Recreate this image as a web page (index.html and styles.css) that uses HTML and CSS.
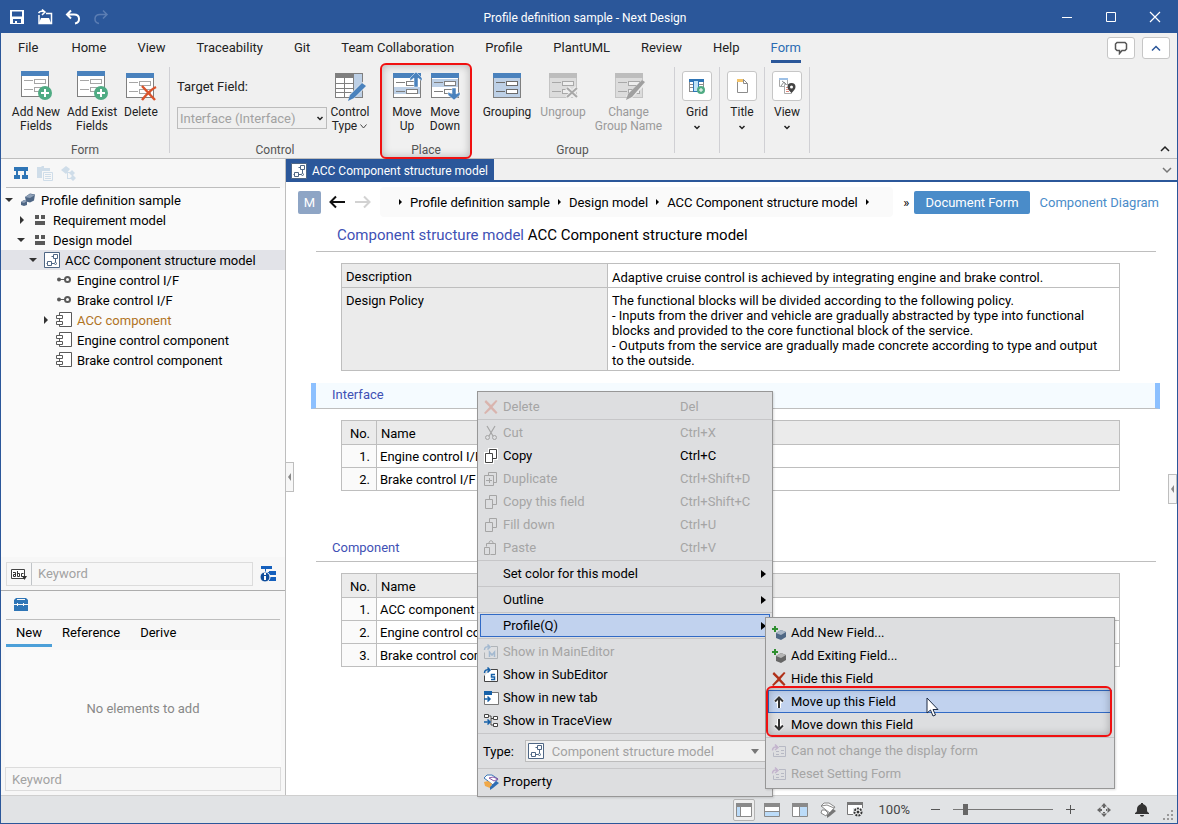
FILE: index.html
```html
<!DOCTYPE html>
<html lang="en">
<head>
<meta charset="utf-8">
<meta name="viewport" content="width=device-width, initial-scale=1">
<title>Profile definition sample - Next Design</title>
<link rel="stylesheet" href="styles.css">
</head>
<body>

<!-- shared icons -->
<svg class="sprite" aria-hidden="true">
    <symbol id="i-form" viewBox="0 0 32 30">
        <g shape-rendering="crispEdges">
            <path fill="#7f7f7f" d="M1 4h28v22H1z"/><path fill="#fff" d="M2 5h26v20H2z"/>
            <path fill="#4a82bd" d="M1 0h28v5H1z"/>
            <path fill="#a6a6a6" d="M4 9h9v1H4zM4 18h9v1H4zM14 8h12v5H14zM14 16h12v5H14z"/>
            <path fill="#fff" d="M15 9h10v3H15zM15 17h10v3H15z"/>
        </g>
        <circle cx="25" cy="22" r="7" fill="#4fab83"/>
        <path stroke="#fff" stroke-width="2" d="M25 18v8M21 22h8"/>
    </symbol>
    <symbol id="i-structure" viewBox="0 0 16 16">
        <path fill="#fff" stroke="#4f6785" d="M.5.5h15v15H.5z"/>
        <path fill="none" stroke="#4f6785" d="M9.500 2.500h4v4h-4zM3.500 9.500h4v4h-4zM7.500 11.500h3M11.500 6.500v4M9.500 4.500h-2M3.500 11.500h-1"/>
        <circle cx="11.500" cy="11.500" r="1" fill="#fff" stroke="#4f6785"/>
    </symbol>
    <symbol id="i-interface" viewBox="0 0 16 16">
        <circle cx="3" cy="7.500" r="2" fill="#595959"/><path stroke="#595959" d="M3 7.500h6"/>
        <circle cx="11.500" cy="7.500" r="2.500" fill="none" stroke="#595959" stroke-width="2"/>
    </symbol>
    <symbol id="i-component" viewBox="0 0 16 16">
        <path fill="#fff" stroke="#595959" d="M3.500.5h12v14h-12z"/>
        <path fill="#fff" stroke="#595959" d="M.5 3.500h6v3h-6zM.5 9.500h6v3h-6z"/>
    </symbol>
    <symbol id="i-package" viewBox="0 0 16 16">
        <path fill="#595959" d="M3 3h4v4H3zM9 3h4v4H9zM3 9h10v4H3z"/>
    </symbol>
    <symbol id="i-copy" viewBox="0 0 16 16">
        <path fill="none" stroke="currentColor" d="M6.500 5v-3.500h7v9H10M2.500 5.500h7v9h-7z"/>
    </symbol>
    <symbol id="i-cross" viewBox="0 0 16 16">
        <path fill="currentColor" d="M3 1l5 5 5-5 1.500 1L9.500 8l5 5.500-1.500 1.500L8 10l-5.500 5L1 14l5.500-6L1.500 3z"/>
    </symbol>
    <symbol id="i-down" viewBox="0 0 8 8"><path fill="none" stroke="currentColor" stroke-width="1.500" d="M1.500 3l2.500 2.500L6.500 3"/></symbol>
    <symbol id="i-formset" viewBox="0 0 16 16">
        <path fill="none" stroke="#b7b9c4" d="M8 3.500h6.500v10h-12v-4"/>
        <path stroke="#b7b9c4" d="M5 8.500h3M10 7.500h3M5 11.500h3M10 10.500h3"/>
        <path fill="none" stroke="#c3b4cd" stroke-width="1.500" d="M1.500 7.500c0-3 2-4 5-3M4 1.500l3 3L4 7"/>
    </symbol>
</svg>

<div class="app">
    <header class="titlebar">
        <div class="quick">
            <button type="button" aria-label="Save"><svg width="16" height="16" viewBox="0 0 16 16"><path fill="#fff" d="M1 1h14v14H1zM3 2.500v5h10v-5zM4 10v4h2v-2h2v2h4v-4z" fill-rule="evenodd"/></svg></button>
            <button type="button" aria-label="Open"><svg width="16" height="16" viewBox="0 0 16 16"><path fill="none" stroke="#fff" stroke-width="1.500" d="M2 6v8.500h12.500V4.500H9M1.500 4c1-1.500 3-2 5-1.500M5 .5l3 2.500-3 3"/><path fill="#fff" d="M4 9h8l2 5H2z"/></svg></button>
            <button type="button" aria-label="Undo"><svg width="16" height="16" viewBox="0 0 16 16"><path fill="none" stroke="#fff" stroke-width="2" d="M6 1.500L2 5.500l4 4M2.500 5.500H9c6.500 0 6.500 8 1 9"/></svg></button>
            <button type="button" aria-label="Redo" disabled><svg width="16" height="16" viewBox="0 0 16 16"><path fill="none" stroke="#5b7db3" stroke-width="1.500" d="M10 1.500l4 4-4 4M13.500 5.500H7c-6.500 0-6.500 8-1 9"/></svg></button>
        </div>
        <h1>Profile definition sample - Next Design</h1>
        <div class="window-buttons">
            <button type="button" aria-label="Minimize"><svg width="12" height="12" viewBox="0 0 12 12"><path stroke="#fff" d="M1 6.500h10"/></svg></button>
            <button type="button" aria-label="Maximize"><svg width="12" height="12" viewBox="0 0 12 12"><path fill="none" stroke="#fff" d="M1.500 1.500h9v9h-9z"/></svg></button>
            <button type="button" aria-label="Close"><svg width="12" height="12" viewBox="0 0 12 12"><path stroke="#fff" stroke-width="1.200" d="M1 1l10 10M11 1L1 11"/></svg></button>
        </div>
    </header>

    <nav class="menubar">
        <button type="button" class="file">File</button>
        <button type="button">Home</button>
        <button type="button">View</button>
        <button type="button">Traceability</button>
        <button type="button">Git</button>
        <button type="button">Team Collaboration</button>
        <button type="button">Profile</button>
        <button type="button">PlantUML</button>
        <button type="button">Review</button>
        <button type="button">Help</button>
        <button type="button" class="active">Form</button>
        <div class="menubar-right">
            <button type="button" class="box-button" aria-label="Comments"><svg width="14" height="14" viewBox="0 0 14 14"><path fill="none" stroke="#555" stroke-width="1.500" d="M3 1.500h8l1.500 1.500v5L11 9.500H8l-2.500 3v-3H3L1.500 8V3z"/></svg></button>
            <button type="button" class="box-button" aria-label="Collapse"><svg width="14" height="14" viewBox="0 0 14 14"><path fill="none" stroke="#2b579a" stroke-width="1.500" d="M3 9.500L7 5.500l4 4"/></svg></button>
        </div>
    </nav>

    <section class="ribbon">
        <div class="group group-form">
            <div class="group-items">
                <button type="button" class="tool"><svg width="32" height="30"><use href="#i-form"/></svg><span>Add New<br>Fields</span></button>
                <button type="button" class="tool"><svg width="32" height="30"><use href="#i-form"/></svg><span>Add Exist<br>Fields</span></button>
                <button type="button" class="tool tool-small"><svg width="32" height="30" viewBox="0 0 32 30"><g shape-rendering="crispEdges"><path fill="#7f7f7f" d="M1 4h28v23H1z"/><path fill="#fff" d="M2 7h26v19H2z"/><path fill="#4a82bd" d="M1 2h28v5H1z"/><path fill="#a6a6a6" d="M4 11h9v1H4zM4 20h9v1H4zM14 10h12v5H14zM14 18h12v5H14z"/><path fill="#fff" d="M15 11h10v3H15zM15 19h10v3H15z"/></g><path stroke="#d9532c" stroke-width="2.500" fill="none" d="M17 15l13 14M31 16c-6 3-10 8-14 13"/></svg><span>Delete</span></button>
            </div>
            <div class="group-label">Form</div>
        </div>
        <div class="group group-control">
            <div class="group-items">
                <div class="target-field">
                    <label for="target">Target Field:</label>
                    <div class="select">
                        <select id="target" disabled><option>Interface (Interface)</option></select>
                        <svg width="8" height="8"><use href="#i-down"/></svg>
                    </div>
                </div>
                <button type="button" class="tool tool-small"><svg width="32" height="30" viewBox="0 0 32 30"><g shape-rendering="crispEdges"><path fill="#7f7f7f" d="M1 2h28v25H1z"/><path fill="#fff" d="M2 7h8v5H2zM11 7h8v5h-8zM2 13h8v4H2zM11 13h8v4h-8zM2 18h8v3H2zM11 18h8v3h-8zM2 22h8v4H2zM11 22h8v4h-8z"/><path fill="#bdd0e6" d="M20 3h8v23h-8z"/></g><path stroke="#f0f0f0" stroke-width="6" d="M16 27L31 13"/><path fill="#4a82bd" d="M14 30l2-6L28 12l4 3-12 12z"/></svg><span>Control<br>Type<svg class="inline-arrow" width="9" height="8" viewBox="0 0 8 8"><path fill="none" stroke="#444" d="M1 2.500L4 6l3-3.500"/></svg></span></button>
            </div>
            <div class="group-label">Control</div>
        </div>
        <div class="group group-place">
            <div class="group-items">
                <button type="button" class="tool tool-narrow"><svg width="32" height="30" viewBox="0 0 32 30"><g shape-rendering="crispEdges"><path fill="#7f7f7f" d="M2 4h28v23H2z"/><path fill="#fff" d="M3 7h26v19H3z"/><path fill="#bdd0e6" d="M3 16h26v7H3z"/><path fill="#4a82bd" d="M2 2h28v5H2z"/><path fill="#7f7f7f" d="M5 11h9v1H5zM5 20h9v1H5zM15 10h12v5H15zM15 18h12v5H15z"/><path fill="#fff" d="M16 11h10v3H16zM16 19h10v3H16z"/></g><path fill="#4a82bd" stroke="#fff" stroke-width=".5" d="M25 1l6 6v3l-4-3v9h-4V7l-4 3V7z"/></svg><span>Move<br>Up</span></button>
                <button type="button" class="tool tool-narrow"><svg width="32" height="30" viewBox="0 0 32 30"><g shape-rendering="crispEdges"><path fill="#7f7f7f" d="M2 4h28v23H2z"/><path fill="#fff" d="M3 7h26v19H3z"/><path fill="#bdd0e6" d="M3 8h26v8H3z"/><path fill="#4a82bd" d="M2 2h28v5H2z"/><path fill="#7f7f7f" d="M5 11h9v1H5zM5 20h9v1H5zM15 10h12v5H15zM15 18h12v5H15z"/><path fill="#fff" d="M16 11h10v3H16zM16 19h10v3H16z"/></g><path fill="#4a82bd" stroke="#fff" stroke-width=".5" d="M23 17h4v6l4-2v3l-6 5-6-5v-3l4 2z"/></svg><span>Move<br>Down</span></button>
            </div>
            <div class="group-label">Place</div>
            <div class="callout callout-place"></div>
        </div>
        <div class="group group-group">
            <div class="group-items">
                <button type="button" class="tool"><svg width="32" height="30" viewBox="0 0 32 30"><g shape-rendering="crispEdges"><path fill="#7f7f7f" d="M2 4h28v23H2z"/><path fill="#bdd0e6" d="M3 7h26v19H3z"/><path fill="#4a82bd" d="M2 2h28v5H2z"/><path fill="#6b6b6b" d="M5 11h9v1H5zM5 20h9v1H5zM15 10h12v5H15zM15 18h12v5H15z"/><path fill="#fff" d="M16 11h10v3H16zM16 19h10v3H16z"/></g></svg><span>Grouping</span></button>
                <button type="button" class="tool" disabled><svg width="32" height="30" viewBox="0 0 32 30"><g shape-rendering="crispEdges"><path fill="#c4c4c4" d="M2 4h28v23H2z"/><path fill="#dcdcdc" d="M3 7h26v19H3z"/><path fill="#bdbdbd" d="M2 2h28v5H2z"/><path fill="#a8a8a8" d="M5 11h9v1H5zM5 20h9v1H5zM15 10h12v5H15zM15 18h12v5H15z"/><path fill="#eee" d="M16 11h10v3H16zM16 19h10v3H16z"/></g><path stroke="#eee" stroke-width="5" d="M20 17l10 10M30 17L20 27"/><path stroke="#a8a8a8" stroke-width="2" d="M20 17l10 9M30 17l-10 9"/></svg><span>Ungroup</span></button>
                <button type="button" class="tool tool-wide" disabled><svg width="32" height="30" viewBox="0 0 32 30"><g shape-rendering="crispEdges"><path fill="#c4c4c4" d="M2 4h28v23H2z"/><path fill="#dcdcdc" d="M3 7h26v19H3z"/><path fill="#bdbdbd" d="M2 2h28v5H2z"/><path fill="#a8a8a8" d="M5 11h9v1H5zM5 20h9v1H5zM15 10h12v5H15zM15 18h12v5H15z"/><path fill="#eee" d="M16 11h10v3H16zM16 19h10v3H16z"/></g><path stroke="#eee" stroke-width="6" d="M15 27L31 11"/><path fill="#a0a0a0" d="M13 29l2-6L29 9l3 2-13 15z"/></svg><span>Change<br>Group Name</span></button>
            </div>
            <div class="group-label">Group</div>
        </div>
        <div class="group group-single">
            <button type="button" class="tool"><span class="icon-box"><svg width="18" height="18" viewBox="0 0 18 18"><g shape-rendering="crispEdges"><path fill="#8c8c8c" d="M1 2h15v13H1z"/><path fill="#fff" d="M2 5h3v2H2zM2 8h3v2H2zM2 11h3v3H2zM11 5h4v2h-4zM11 8h4v2h-4zM11 11h4v3h-4z"/><path fill="#2e75b6" d="M1 2h15v3H1z"/><path fill="#2e75b6" d="M5 2h6v13H5z"/><path fill="#bfe3f7" d="M6 4h4v10H6z"/></g><circle cx="13" cy="13" r="4" fill="#4fab83"/><path stroke="#fff" d="M13 11v4M11 13h4"/></svg></span><span>Grid</span><svg width="8" height="8"><use href="#i-down"/></svg></button>
        </div>
        <div class="group group-single">
            <button type="button" class="tool"><span class="icon-box"><svg width="18" height="18" viewBox="0 0 18 18"><path fill="#fff" stroke="#8c8c8c" d="M4.500 2.500h6l4 4v9h-10z"/><path fill="#f4c469" d="M4 2h6v3H4z"/><path fill="none" stroke="#8c8c8c" d="M10.500 2.500v4h4"/></svg></span><span>Title</span><svg width="8" height="8"><use href="#i-down"/></svg></button>
        </div>
        <div class="group group-single">
            <button type="button" class="tool"><span class="icon-box"><svg width="18" height="18" viewBox="0 0 18 18"><path fill="#fff" stroke="#a8a8a8" d="M1.500 2.500h8v7h-8z"/><path fill="#9dc0e6" d="M1 1h9v2H1z"/><path fill="none" stroke="#8c8c8c" d="M3 9l3-4 3 4M4 4l4 3"/><path fill="#fff" stroke="#a8a8a8" d="M6.500 7.500h7v9h-7z"/><path stroke="#e08a7d" d="M8 10.500h3M8 12.500h3M8 14.500h3"/><path fill="#444" d="M13.500 6a4 4 0 0 1 4 4c0 2-2 4-4 6-2-2-4-4-4-6a4 4 0 0 1 4-4z"/><circle cx="13.500" cy="10" r="1.500" fill="#fff"/></svg></span><span>View</span><svg width="8" height="8"><use href="#i-down"/></svg></button>
        </div>
        <button type="button" class="ribbon-fold" aria-label="Fold ribbon"><svg width="12" height="8" viewBox="0 0 12 8"><path fill="none" stroke="#222" stroke-width="1.500" d="M2 6l4-4 4 4"/></svg></button>
    </section>

    <div class="workspace">
        <aside class="sidebar">
            <div class="pane-tools">
                <svg width="16" height="16" viewBox="0 0 16 16"><path fill="#2e75b6" d="M1 2h14v4h-2v4h2v4H9v-4h2V6H5v4h2v4H1v-4h2V6H1z"/></svg>
                <svg width="16" height="16" viewBox="0 0 16 16"><path fill="#cfdde9" d="M0 2h4l1-1h2v2h6v3H5v7H0z"/><path fill="#f7f7f7" stroke="#cfdde9" d="M6.500 7.500h9v8h-9z"/><path stroke="#cfdde9" d="M8 9.500h6M8 11.500h6M8 13.500h6"/></svg>
                <svg width="16" height="16" viewBox="0 0 16 16"><path fill="#cfdde9" d="M5 1l4 3-4 5-5-4zM11 5l3 3-3 3-3-3zM12 10l3 3-3 3-3-3zM6 7h4v1H7v5h3v1H6z"/></svg>
            </div>
            <ul class="tree">
                <li class="level-0"><i class="open"></i><svg width="16" height="16" viewBox="0 0 16 16"><path fill="#4f6785" d="M5 5l5-3.500 5 1-1 6-4 2-4-1z"/><path fill="#8fa1b8" d="M5 5l5-3 5 1-5 3z"/><path fill="#4f6785" d="M1 10l3-2 3 1v4l-3 1-3-1z"/><path fill="#8fa1b8" d="M1 10l3-2 3 1-3 2z"/></svg>Profile definition sample</li>
                <li class="level-1"><i class="closed"></i><svg width="16" height="16"><use href="#i-package"/></svg>Requirement model</li>
                <li class="level-1"><i class="open"></i><svg width="16" height="16"><use href="#i-package"/></svg>Design model</li>
                <li class="level-2 selected"><i class="open"></i><svg width="16" height="16"><use href="#i-structure"/></svg>ACC Component structure model</li>
                <li class="level-3"><i></i><svg width="16" height="16"><use href="#i-interface"/></svg>Engine control I/F</li>
                <li class="level-3"><i></i><svg width="16" height="16"><use href="#i-interface"/></svg>Brake control I/F</li>
                <li class="level-3 changed"><i class="closed"></i><svg width="16" height="16"><use href="#i-component"/></svg>ACC component</li>
                <li class="level-3"><i></i><svg width="16" height="16"><use href="#i-component"/></svg>Engine control component</li>
                <li class="level-3"><i></i><svg width="16" height="16"><use href="#i-component"/></svg>Brake control component</li>
            </ul>
            <div class="filter">
                <div class="filter-box">
                    <svg width="24" height="16" viewBox="0 0 24 16"><path fill="#fff" stroke="#444" d="M4.500 3.500h13v9h-13z"/><path fill="none" stroke="#333" d="M6 6.500h2.500v4h-2v-2h2M10.500 5v5.500h2v-3h-2M16.500 7.500h-2v3h2"/><path fill="#333" d="M15 10h5l-2.500 4z"/></svg>
                    <input type="text" placeholder="Keyword" aria-label="Filter model">
                </div>
                <svg width="16" height="16" viewBox="0 0 16 16"><path fill="#1560bd" d="M1 0h11v3H1zM9 5h7v4H9zM9 11h7v4H9z"/><path stroke="#1560bd" d="M5.500 3v3M7 6.500h3"/><circle cx="5" cy="11" r="5" fill="#0d4c9b" stroke="#f7f7f7"/><path stroke="#fff" stroke-width="2" d="M5 10v4M5 7v2"/></svg>
            </div>
            <div class="toolbox">
                <div class="pane-tools"><svg width="16" height="16" viewBox="0 0 16 16"><path fill="#2e75b6" d="M1 3l2-2h10l2 2v4H1zM1 8h14v6H1z"/><path fill="#f7f7f7" d="M4 2h8v1H4zM4 6h1v3H4zM10 6h1v3h-1z"/></svg></div>
                <div class="pane-tabs">
                    <button type="button" class="active">New</button>
                    <button type="button">Reference</button>
                    <button type="button">Derive</button>
                </div>
                <div class="empty">No elements to add</div>
                <input type="text" class="toolbox-search" placeholder="Keyword" aria-label="Filter elements">
            </div>
        </aside>

        <main class="editor">
            <div class="tabstrip">
                <button type="button" class="doc-tab"><svg width="16" height="16"><use href="#i-structure"/></svg>ACC Component structure model</button>
                <svg class="tab-list" width="10" height="8" viewBox="0 0 10 8"><path fill="none" stroke="#777" stroke-width="1.500" d="M1 2l4 4 4-4"/></svg>
            </div>
            <div class="pathbar">
                <span class="badge">M</span>
                <button type="button" class="nav-arrow" aria-label="Back"><svg width="17" height="14" viewBox="0 0 17 14"><path fill="none" stroke="#111" stroke-width="2" d="M16 7H2M7 1.500L1.500 7 7 12.500"/></svg></button>
                <button type="button" class="nav-arrow" aria-label="Forward" disabled><svg width="17" height="14" viewBox="0 0 17 14"><path fill="none" stroke="#d2d2d2" stroke-width="2" d="M1 7h14M10 1.500L15.500 7 10 12.500"/></svg></button>
                <div class="breadcrumb">
                    <i></i><a href="#">Profile definition sample</a>
                    <i></i><a href="#">Design model</a>
                    <i></i><a href="#">ACC Component structure model</a>
                    <i></i>
                </div>
                <span class="more">»</span>
                <button type="button" class="view-button active">Document Form</button>
                <button type="button" class="view-button">Component Diagram</button>
            </div>
            <div class="document">
                <h2><span>Component structure model</span> ACC Component structure model</h2>
                <table class="props">
                    <tr><th>Description</th><td>Adaptive cruise control is achieved by integrating engine and brake control.</td></tr>
                    <tr><th>Design Policy</th><td>The functional blocks will be divided according to the following policy.<br>- Inputs from the driver and vehicle are gradually abstracted by type into functional blocks and provided to the core functional block of the service.<br>- Outputs from the service are gradually made concrete according to type and output to the outside.</td></tr>
                </table>
                <h3 class="current">Interface</h3>
                <table class="list">
                    <thead><tr><th class="no">No.</th><th>Name</th></tr></thead>
                    <tbody>
                        <tr><td class="no">1.</td><td>Engine control I/F</td></tr>
                        <tr><td class="no">2.</td><td>Brake control I/F</td></tr>
                    </tbody>
                </table>
                <h3 class="later">Component</h3>
                <table class="list">
                    <thead><tr><th class="no">No.</th><th>Name</th></tr></thead>
                    <tbody>
                        <tr><td class="no">1.</td><td>ACC component</td></tr>
                        <tr><td class="no">2.</td><td>Engine control component</td></tr>
                        <tr><td class="no">3.</td><td>Brake control component</td></tr>
                    </tbody>
                </table>
            </div>
            <button type="button" class="handle handle-left" aria-label="Collapse left pane"></button>
            <button type="button" class="handle handle-right" aria-label="Open right pane"></button>
        </main>
    </div>

    <footer class="statusbar">
        <div class="layouts">
            <button type="button" class="active" aria-label="Left pane"><svg width="16" height="14" viewBox="0 0 16 14"><path fill="#fff" stroke="#8a8a8a" d="M.5.5h15v13H.5z"/><path fill="#8a8a8a" d="M0 0h16v4H0z"/><path fill="#bcdcf9" d="M1 4h3v9H1z"/><path stroke="#8a8a8a" d="M4.500 4v10"/></svg></button>
            <button type="button" aria-label="Bottom pane"><svg width="16" height="14" viewBox="0 0 16 14"><path fill="#fff" stroke="#8a8a8a" d="M.5.5h15v13H.5z"/><path fill="#8a8a8a" d="M0 0h16v4H0zM1 8h14v1H1z"/><path fill="#bcdcf9" d="M1 9h14v4H1z"/></svg></button>
            <button type="button" aria-label="Right pane"><svg width="16" height="14" viewBox="0 0 16 14"><path fill="#fff" stroke="#8a8a8a" d="M.5.5h15v13H.5z"/><path fill="#8a8a8a" d="M0 0h16v4H0z"/><path fill="#bcdcf9" d="M8 4h7v9H8z"/><path stroke="#8a8a8a" d="M7.500 4v10"/></svg></button>
            <button type="button" aria-label="Property"><svg width="16" height="16" viewBox="0 0 16 16"><path fill="#fff" stroke="#8a8a8a" d="M1 4l3-3h5l6 4-5 6-4-3zM1 4l6-1 7 3M2 8l-1 3 5 3 2-3-3-3z"/><path fill="#777" d="M7 13l6-6 3 2-6 5-3 2z"/></svg></button>
            <button type="button" aria-label="Display settings"><svg width="17" height="15" viewBox="0 0 17 15"><path fill="#fff" stroke="#777" d="M.5.5h15v12H.5z"/><path fill="#777" d="M0 0h16v3H0z"/><path fill="#e1e3e5" d="M6 6h11v9H6z"/><circle cx="11" cy="10" r="3.500" fill="#fff" stroke="#333" stroke-width="2" stroke-dasharray="2 1"/><circle cx="11" cy="10" r="1.500" fill="#333"/></svg></button>
        </div>
        <span class="zoom-value">100%</span>
        <button type="button" aria-label="Zoom out"><svg width="11" height="11" viewBox="0 0 11 11"><path stroke="#555" d="M1 5.500h9"/></svg></button>
        <input type="range" min="0" max="100" value="10" aria-label="Zoom">
        <button type="button" aria-label="Zoom in"><svg width="11" height="11" viewBox="0 0 11 11"><path stroke="#555" d="M1 5.500h9M5.500 1v9"/></svg></button>
        <button type="button" class="fit" aria-label="Fit"><svg width="16" height="16" viewBox="0 0 16 16"><path fill="#666" d="M8 1l3 3.500H5zM8 15l3-3.500H5zM1 8l3.500-3v6zM15 8l-3.500-3v6zM7 4h2v2H7zM7 10h2v2H7zM4 7h2v2H4zM10 7h2v2h-2z"/></svg></button>
        <button type="button" class="bell" aria-label="Notifications"><svg width="14" height="16" viewBox="0 0 14 16"><path fill="#333" d="M6 1h2v1c3 1 4 3 4 5 0 2 0 3 2 4v1H0v-1c2-1 2-2 2-4 0-2 1-4 4-5zM5 13h4c0 2-4 2-4 0z"/></svg></button>
        <svg class="grip" width="10" height="10" viewBox="0 0 10 10"><path fill="#999" d="M8 0h2v2H8zM4 4h2v2H4zM8 4h2v2H8zM0 8h2v2H0zM4 8h2v2H4zM8 8h2v2H8z"/></svg>
    </footer>

    <div class="menu context-menu">
        <button type="button" disabled><svg class="red" width="16" height="16"><use href="#i-cross"/></svg><span>Delete</span><kbd>Del</kbd></button>
        <hr>
        <button type="button" disabled><svg width="16" height="16" viewBox="0 0 16 16"><path fill="none" stroke="currentColor" stroke-width="1.200" d="M4 1l6 10M12 1L6 11"/><circle cx="4.500" cy="12.500" r="2" fill="none" stroke="currentColor"/><circle cx="11.500" cy="12.500" r="2" fill="none" stroke="currentColor"/></svg><span>Cut</span><kbd>Ctrl+X</kbd></button>
        <button type="button"><svg width="16" height="16" viewBox="0 0 16 16"><path fill="#fff" d="M5 0h10v12h-4v4H1V4h4z"/><path fill="none" stroke="#444" d="M6.500 5v-3.500h7v9H10M2.500 5.500h7v9h-7z"/></svg><span>Copy</span><kbd>Ctrl+C</kbd></button>
        <button type="button" disabled><svg width="16" height="16" viewBox="0 0 16 16"><path fill="none" stroke="currentColor" d="M5.500 4.500v-3h8v10h-3M1.500 4.500h9v10h-9zM3 9.500h6M6.500 7v5"/></svg><span>Duplicate</span><kbd>Ctrl+Shift+D</kbd></button>
        <button type="button" disabled><svg width="16" height="16"><use href="#i-copy"/></svg><span>Copy this field</span><kbd>Ctrl+Shift+C</kbd></button>
        <button type="button" disabled><svg width="16" height="16"><use href="#i-copy"/></svg><span>Fill down</span><kbd>Ctrl+U</kbd></button>
        <button type="button" disabled><svg width="16" height="16" viewBox="0 0 16 16"><path fill="none" stroke="currentColor" d="M3.500 6.500v-3h9v11h-5M1.500 7.500h5v7h-5zM6 3c0-3 4-3 4 0"/></svg><span>Paste</span><kbd>Ctrl+V</kbd></button>
        <hr>
        <button type="button" class="has-sub"><span>Set color for this model</span></button>
        <hr>
        <button type="button" class="has-sub"><span>Outline</span></button>
        <hr>
        <button type="button" class="has-sub hover"><span>Profile(Q)</span></button>
        <hr>
        <button type="button" disabled><svg width="16" height="16" viewBox="0 0 16 16"><path fill="none" stroke="#b0b4b8" d="M8 2.500h6.500v12h-13v-6"/><path fill="none" stroke="#a3b9d0" stroke-width="1.500" d="M1.500 6c0-3 2-3.500 5-3M4.500.5L7 3 4.500 5.500M6.500 13V8l2.500 3 2.500-3v5"/></svg><span>Show in MainEditor</span></button>
        <button type="button"><svg width="16" height="16" viewBox="0 0 16 16"><path fill="#fff" stroke="#444" d="M8 2.500h6.500v12h-13v-6"/><path fill="none" stroke="#1560a8" stroke-width="1.500" d="M1.500 6c0-3 2-3.500 5-3M4.500.5L7 3 4.500 5.500M12 7.500H8.500v2.500h3v2.500H8"/></svg><span>Show in SubEditor</span></button>
        <button type="button"><svg width="16" height="16" viewBox="0 0 16 16"><path fill="#fff" stroke="#777" d="M1.500 2.500h14v12h-14z"/><path fill="#1560a8" d="M1 1h8v4H1z"/><path fill="none" stroke="#1560a8" stroke-width="1.500" d="M1 9h6M4.500 6.500L7 9l-2.500 2.500"/></svg><span>Show in new tab</span></button>
        <button type="button"><svg width="16" height="16" viewBox="0 0 16 16"><path fill="#fff" stroke="#444" d="M1.500 1.500h4v3h-4zM10.500 3.500h4v3h-4zM10.500 10.500h4v3h-4zM5.500 3h2.500v9h2.500M8 5.500h2.500"/><path fill="none" stroke="#1560a8" stroke-width="1.500" d="M1 9h6M4.500 6.500L7 9l-2.500 2.500"/></svg><span>Show in TraceView</span></button>
        <hr>
        <div class="type-row">
            <label for="type">Type:</label>
            <div class="select">
                <svg class="type-icon" width="16" height="16"><use href="#i-structure"/></svg>
                <select id="type" disabled><option>Component structure model</option></select>
                <i></i>
            </div>
        </div>
        <hr>
        <button type="button"><svg width="16" height="16" viewBox="0 0 16 16"><path fill="#fff" stroke="#3a76b8" d="M1 4l3-3h5l6 4-5 6-5-4z"/><path fill="none" stroke="#8a56a8" d="M6 4l4-1 5 2-4 2z"/><path fill="#f0a848" d="M1 8l4-1 4 3-2 4-5-2z"/><path fill="#2f6db3" d="M7 13l6-6 3 2-6 5-3 2z"/></svg><span>Property</span></button>
    </div>

    <div class="menu sub-menu">
        <button type="button"><svg width="16" height="16" viewBox="0 0 16 16"><path fill="#4f6785" d="M5 8l5-3 5 2v5l-5 3-5-2z"/><path fill="#a9b6c6" d="M5 8l5-3 5 2-5 3z"/><path stroke="#2f8f2f" stroke-width="2" d="M4 1v6M1 4h6"/></svg><span>Add New Field...</span></button>
        <button type="button"><svg width="16" height="16" viewBox="0 0 16 16"><path fill="#666" d="M5 8l5-3 5 2v5l-5 3-5-2z"/><path fill="#b5b5b5" d="M5 8l5-3 5 2-5 3z"/><path stroke="#2f8f2f" stroke-width="2" d="M4 1v6M1 4h6"/></svg><span>Add Exiting Field...</span></button>
        <button type="button"><svg class="red" width="16" height="16"><use href="#i-cross"/></svg><span>Hide this Field</span></button>
        <button type="button" class="hover"><svg width="16" height="16" viewBox="0 0 16 16"><path fill="none" stroke="#fff" stroke-width="4" d="M8 14V4M4 8l4-4 4 4"/><path fill="none" stroke="#333" stroke-width="2" d="M8 14V3M4 7.500l4-4 4 4"/></svg><span>Move up this Field</span></button>
        <button type="button"><svg width="16" height="16" viewBox="0 0 16 16"><path fill="none" stroke="#fff" stroke-width="4" d="M8 2v10M4 8l4 4 4-4"/><path fill="none" stroke="#333" stroke-width="2" d="M8 2v11M4 8.500l4 4 4-4"/></svg><span>Move down this Field</span></button>
        <hr>
        <button type="button" disabled><svg width="16" height="16"><use href="#i-formset"/></svg><span>Can not change the display form</span></button>
        <button type="button" disabled><svg width="16" height="16"><use href="#i-formset"/></svg><span>Reset Setting Form</span></button>
        <div class="callout callout-move"></div>
        <svg class="pointer" width="13" height="20" viewBox="0 0 13 20"><path fill="#fff" stroke="#1c2b45" d="M1 1v15l3.500-3 2.500 6 2.500-1L7 12.500h5z"/></svg>
    </div>
</div>

</body>
</html>
```

FILE: styles.css
```css
* {
    box-sizing: border-box;
}

body {
    margin: 0;
    font-family: Roboto, "Noto Sans", sans-serif;
    font-size: 13px;
    color: #000;
}

button, input, select {
    font: inherit;
    color: inherit;
}

button {
    padding: 0;
    border: none;
    background: none;
}

a {
    color: inherit;
    text-decoration: none;
}

svg {
    flex: none;
    display: block;
}

.sprite {
    position: absolute;
    width: 0;
    height: 0;
}

.app {
    position: relative;
    display: flex;
    flex-direction: column;
    min-height: 100vh;
    border: 1px solid #2b579a;
    border-top: none;
    overflow: hidden;
}

/* title bar */
.titlebar {
    display: grid;
    grid-template-columns: 1fr auto 1fr;
    align-items: center;
    height: 33px;
    padding: 0 16px 0 8px;
    background: #2b579a;
    color: #fff;
}
.titlebar h1 {
    margin: 0;
    padding-top: 2px;
    font-size: 12px;
    font-weight: normal;
}
.quick {
    display: flex;
    gap: 12px;
}
.window-buttons {
    display: flex;
    justify-content: flex-end;
    gap: 32px;
}

/* menu tabs */
.menubar {
    display: flex;
    align-items: center;
    gap: 31px;
    height: 30px;
    padding: 0 7px 0 17px;
    background: #f0f0f0;
    color: #222;
}
.menubar > button {
    height: 30px;
    padding-top: 2px;
    border-bottom: 3px solid transparent;
}
.menubar > .file {
    margin-right: 2px;
}
.menubar > .active {
    color: #2b6cb3;
    border-color: #2b579a;
}
.menubar-right {
    display: flex;
    gap: 7px;
    margin-left: auto;
}
.box-button {
    display: flex;
    align-items: center;
    justify-content: center;
    width: 28px;
    height: 22px;
    background: #fff;
    border: 1px solid #c6c6c6;
    border-radius: 3px;
}

/* ribbon */
.ribbon {
    display: flex;
    height: 96px;
    padding: 4px 0 5px;
    background: #f0f0f0;
    border-bottom: 1px solid #bebebe;
    color: #222;
}
.group {
    position: relative;
    display: flex;
    flex-direction: column;
    justify-content: space-between;
}
.group-form,
.group-group,
.group-single {
    border-right: 1px solid #d0d0d4;
}
.group-form {
    padding: 0 7px;
}
.group-control {
    padding: 0 8px 0 7px;
}
.group-place {
    padding: 0 7px;
}
.group-group {
    padding: 0 9px;
}
.group-single {
    width: 45px;
}
.group-items {
    display: flex;
}
.group-group .group-items {
    gap: 2px;
}
.group-label {
    margin-bottom: -4px;
    text-align: center;
    line-height: 14px;
    font-size: 12px;
    color: #555;
}
.tool {
    display: flex;
    flex-direction: column;
    align-items: center;
    width: 56px;
    padding-top: 4px;
    font-size: 12px;
    line-height: 14px;
    white-space: nowrap;
    gap: 4px;
}
.group-group .tool {
    width: 54px;
}
.group-single .tool {
    width: 44px;
}
.tool-small {
    width: 42px;
}
.group-control .tool-small {
    width: 46px;
}
.tool-narrow {
    width: 38px;
}
.group-group .tool-wide {
    width: 73px;
}
.tool:disabled {
    color: #9a9a9a;
}
.inline-arrow {
    display: inline-block;
    margin-left: 2px;
}
.icon-box {
    display: flex;
    align-items: center;
    justify-content: center;
    width: 30px;
    height: 30px;
    background: #fff;
    border: 1px solid #c6c6c6;
    border-radius: 3px;
}
.target-field {
    width: 150px;
    padding-top: 11px;
}
.target-field label {
    display: block;
    line-height: 18px;
}
.select {
    position: relative;
    display: flex;
    align-items: center;
}
.select select {
    width: 100%;
    height: 22px;
    padding: 0 2px;
    appearance: none;
    background: #efefef;
    border: 1px solid #bcbcbc;
    border-radius: 0;
    color: #a2a2a2;
    opacity: 1;
}
.target-field .select {
    margin-top: 11px;
}
.target-field svg {
    position: absolute;
    right: 3px;
}
.ribbon-fold {
    align-self: flex-end;
    margin: 0 6px 0 auto;
}

/* red frames that mark the commands */
.callout {
    position: absolute;
    border: 2px solid #f01010;
    border-radius: 6px;
    box-shadow: inset 0 0 8px #0004;
    pointer-events: none;
}
.callout-place {
    inset: -4px -1px -6px;
}
.callout-move {
    inset: 68px 2px 51px 0;
}

/* side panes */
.workspace {
    flex: 1;
    display: flex;
}
.sidebar {
    display: flex;
    flex-direction: column;
    width: 285px;
    background: #f7f7f7;
    border-right: 1px solid #bebebe;
}
.pane-tools {
    display: flex;
    align-items: center;
    gap: 8px;
    height: 29px;
    margin: 0 5px;
    padding-left: 7px;
    border-bottom: 1px solid #bebebe;
}
.tree {
    flex: 1;
    margin: 0;
    padding: 2px 0 0;
    list-style: none;
    background: #fafafa;
}
.tree li {
    display: flex;
    align-items: center;
    height: 20px;
}
.tree li svg {
    margin-right: 5px;
}
.tree i {
    flex: none;
    width: 15px;
}
.tree i::before,
.breadcrumb i::before {
    content: "";
    display: block;
    width: 0;
    border: 4px solid transparent;
}
.tree .open::before {
    border-top-color: #333;
    border-bottom: none;
}
.tree .closed::before {
    border-left-color: #333;
    border-right: none;
    margin-left: 3px;
}
.level-0 { padding-left: 4px; }
.level-1 { padding-left: 16px; }
.level-2 { padding-left: 28px; }
.level-3 { padding-left: 40px; }
.tree .selected {
    background: #e2e3e8;
}
.tree .changed {
    color: #b0731f;
}
.filter {
    display: flex;
    align-items: center;
    gap: 7px;
    height: 34px;
    padding: 0 9px 0 5px;
    border-bottom: 1px solid #adadad;
}
.filter-box {
    flex: 1;
    display: flex;
    align-items: center;
    height: 24px;
    border: 1px solid #dcdcdc;
}
input[type="text"] {
    min-width: 0;
    height: 22px;
    padding: 0 6px;
    background: none;
    border: none;
}
.filter-box input {
    flex: 1;
    border-left: 1px solid #c0c4c8;
}
::placeholder {
    color: #a2a2a2;
}
.toolbox {
    display: flex;
    flex-direction: column;
    height: 204px;
}
.pane-tabs {
    display: flex;
    padding: 0 5px;
    height: 27px;
    margin-bottom: 3px;
}
.pane-tabs button {
    padding: 0 10px;
    border-bottom: 3px solid transparent;
}
.pane-tabs .active {
    border-color: #4b9fd8;
}
.empty {
    flex: 1;
    display: flex;
    align-items: center;
    justify-content: center;
    margin: 0 4px;
    background: #fafafa;
    color: #888;
}
input.toolbox-search {
    height: 24px;
    margin: 0 4px 4px;
    border: 1px solid #dcdcdc;
}

/* editor */
.editor {
    position: relative;
    flex: 1;
    min-width: 0;
    background: #fff;
}
.tabstrip {
    display: flex;
    align-items: center;
    justify-content: space-between;
    height: 23px;
    padding-right: 5px;
    background: #f0f0f0;
    border-bottom: 2px solid #2b579a;
}
.doc-tab {
    display: flex;
    align-items: center;
    gap: 5px;
    height: 21px;
    padding: 2px 6px 0 5px;
    background: #2b579a;
    color: #fff;
    font-size: 12px;
}
.pathbar {
    display: flex;
    align-items: center;
    height: 40px;
    padding: 0 8px 0 12px;
}
.badge {
    width: 23px;
    height: 23px;
    margin-right: 8px;
    background: #8ea5c5;
    border-radius: 2px;
    color: #fff;
    line-height: 23px;
    text-align: center;
}
.nav-arrow {
    margin-right: 8px;
}
.breadcrumb {
    flex: 1;
    display: flex;
    align-items: center;
    gap: 8px;
    height: 30px;
    margin-left: 1px;
    padding-left: 19px;
    background: #fafafa;
    border-radius: 4px;
    white-space: nowrap;
}
.breadcrumb i::before {
    border: 3px solid transparent;
    border-left-color: #000;
    border-right: none;
}
.more {
    margin: 0 5px 0 10px;
}
.view-button {
    height: 23px;
    padding: 0 10px;
    border-radius: 2px;
    color: #4a8cc9;
    white-space: nowrap;
}
.view-button.active {
    padding: 0 11px;
    background: #4a8cc9;
    color: #fff;
}
.document {
    padding: 0 21px 0 30px;
}
.document h2 {
    height: 30px;
    margin: 0 0 11px;
    padding-left: 21px;
    border-bottom: 1px solid #bebebe;
    font-size: 15px;
    font-weight: normal;
    line-height: 27px;
}
.document h2 span,
.document h3 {
    color: #3f51b5;
}
.document h3 {
    height: 26px;
    margin: 12px 0 11px;
    padding-left: 16px;
    border-bottom: 1px solid #bebebe;
    font-size: 13px;
    font-weight: normal;
    line-height: 24px;
}
.document .current {
    margin: 12px -4px 11px -5px;
    background: #f5fbff;
    border-left: 5px solid #8cc0ff;
    border-right: 5px solid #8cc0ff;
}
.document .later {
    margin-top: 45px;
}
.document table {
    width: calc(100% - 61px);
    margin-left: 25px;
    border-collapse: collapse;
}
.document th,
.document td {
    height: 23px;
    padding: 0 3px;
    border: 1px solid #bebebe;
    font-weight: normal;
    line-height: 15px;
    text-align: left;
}
.document th {
    height: 24px;
    padding: 2px 4px 0;
    background: #ebebeb;
}
.props th {
    width: 266px;
    vertical-align: top;
}
.document .props th,
.document .props td {
    padding: 5px 10px 2px 4px;
}
.document .no {
    width: 35px;
    padding-right: 6px;
    text-align: right;
}
td.no {
    background: #fafafa;
}
.handle {
    position: absolute;
    width: 9px;
    height: 30px;
    background: #f7f7f7;
    border: 1px solid #bebebe;
}
.handle::before {
    content: "";
    display: block;
    width: 0;
    margin-left: 2px;
    border: 4px solid transparent;
    border-left: none;
    border-right: 3px solid #888;
}
.handle-left {
    left: -1px;
    top: 303px;
}
.handle-right {
    right: 0;
    top: 315px;
}

/* status bar */
.statusbar {
    display: flex;
    align-items: center;
    justify-content: flex-end;
    gap: 12px;
    height: 28px;
    padding-right: 4px;
    background: #e1e3e5;
    border-top: 1px solid #cfcfcf;
    color: #444;
}
.layouts {
    display: flex;
    gap: 6px;
}
.layouts button {
    display: flex;
    align-items: center;
    justify-content: center;
    width: 22px;
    height: 22px;
}
.layouts .active {
    background: #eee;
    border: 1px solid #b4b4b4;
    border-radius: 2px;
}
.zoom-value {
    margin-right: 8px;
}
.statusbar input {
    width: 100px;
    height: 16px;
    margin: 0;
    appearance: none;
    background: linear-gradient(#777, #777) center / 100% 1px no-repeat;
}
.statusbar input::-webkit-slider-thumb {
    appearance: none;
    width: 5px;
    height: 11px;
    background: #666;
}
.fit {
    margin-left: 8px;
}
.bell {
    margin: 0 2px 0 11px;
}
.grip {
    align-self: flex-end;
    margin-bottom: 3px;
}

/* menus */
.menu {
    position: absolute;
    padding: 3px 2px;
    background: #dddee0;
    border: 1px solid #979797;
    box-shadow: 1px 1px 2px #0002;
}
.context-menu {
    left: 476px;
    top: 391px;
    width: 296px;
}
.sub-menu {
    left: 764px;
    top: 617px;
    width: 350px;
}
.menu hr {
    height: 1px;
    margin: 1px -2px;
    background: #c6c6c8;
    border: none;
}
.menu button {
    display: flex;
    align-items: center;
    gap: 4px;
    width: 100%;
    height: 23px;
    padding: 0 3px 0 2px;
    border: 1px solid transparent;
    text-align: left;
}
.menu button:disabled {
    color: #a5a5a5;
}
.menu button > span {
    flex: 1;
}
.menu kbd {
    width: 86px;
    font-family: inherit;
    font-size: 13px;
}
.menu .hover {
    background: #c1d2ee;
    border-color: #316ac5;
}
.menu .red {
    color: #b03018;
}
.menu :disabled .red {
    color: #d9b4ae;
}
.menu .has-sub {
    padding-left: 22px;
}
.menu .has-sub::after {
    content: "";
    border: 4px solid transparent;
    border-left: 5px solid #000;
    border-right: none;
}
.type-row {
    display: flex;
    align-items: center;
    gap: 11px;
    height: 32px;
    padding-left: 3px;
}
.type-row .select {
    flex: 1;
}
.type-row select {
    padding-left: 26px;
}
.type-icon,
.type-row i {
    position: absolute;
    left: 3px;
}
.type-row i {
    left: auto;
    right: 11px;
    border: 4px solid transparent;
    border-top: 5px solid #777;
    border-bottom: none;
}
.pointer {
    position: absolute;
    left: 160px;
    top: 79px;
}
```
